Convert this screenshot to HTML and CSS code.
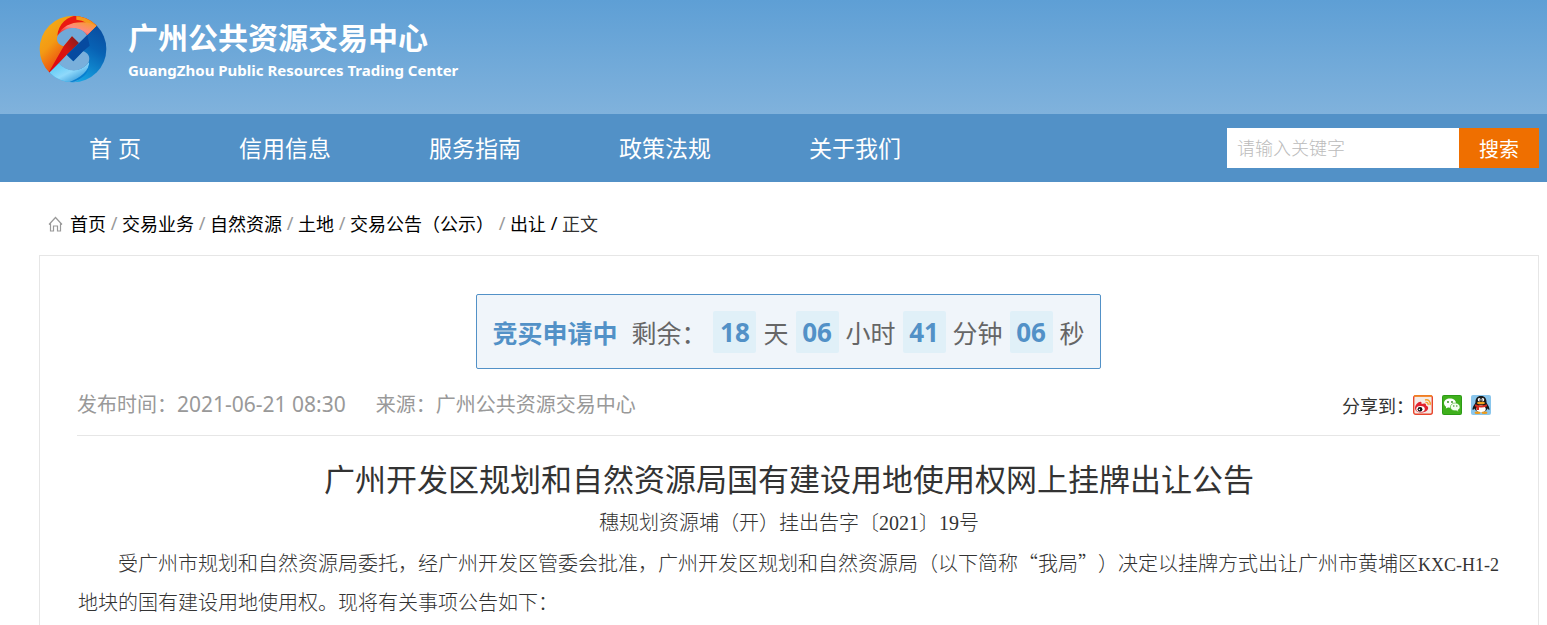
FILE: index.html
```html
<!DOCTYPE html>
<html lang="zh-CN">
<head>
  <meta charset="UTF-8">
  <meta name="viewport" content="width=device-width, initial-scale=1">
  <title>广州公共资源交易中心</title>
  <link rel="stylesheet" href="styles.css">
</head>
<body>
  <header class="header">
    <svg class="logo" viewBox="0 0 204 204" aria-hidden="true">
      <defs>
        <clipPath id="round"><circle cx="102" cy="102" r="100"/></clipPath>
        <linearGradient id="orange" x1="0" y1="0" x2=".6" y2=".6">
          <stop offset="0" stop-color="#f5b517"/>
          <stop offset=".5" stop-color="#f39a14"/>
          <stop offset=".8" stop-color="#ee5a10"/>
          <stop offset="1" stop-color="#e60012"/>
        </linearGradient>
        <linearGradient id="blue" x1="1" y1="0" x2=".4" y2="1">
          <stop offset="0" stop-color="#0a3f92"/>
          <stop offset=".45" stop-color="#0862b4"/>
          <stop offset="1" stop-color="#19b4ee"/>
        </linearGradient>
        <linearGradient id="pink" x1="0" y1="1" x2="1" y2="0">
          <stop offset="0" stop-color="#e60f12"/>
          <stop offset=".5" stop-color="#ff8a80"/>
          <stop offset="1" stop-color="#f5a01c"/>
        </linearGradient>
        <linearGradient id="cyan" x1="0" y1="0" x2="1" y2="1">
          <stop offset="0" stop-color="#48c4f2"/>
          <stop offset=".5" stop-color="#8fd9fb"/>
          <stop offset="1" stop-color="#0b7bc9"/>
        </linearGradient>
        <linearGradient id="fold" x1="0" y1="1" x2="1" y2="0">
          <stop offset="0" stop-color="#e60012"/>
          <stop offset=".6" stop-color="#d8140f"/>
          <stop offset="1" stop-color="#7d1c22"/>
        </linearGradient>
      </defs>
      <g clip-path="url(#round)">
        <path fill="url(#orange)" d="M0 204V0H204Z"/>
        <path fill="url(#blue)" d="M204 0V204H0Z"/>
        <path fill="#ea1a12" d="M55 62C58 28 84 2 122 0C142 2 160 12 178 27L144 60C120 36 80 38 55 62Z"/>
        <path fill="#f39a1c" d="M112 0C140 0 164 10 178 27L160 44C150 28 136 16 112 14Z"/>
        <path fill="url(#pink)" d="M57 60C72 28 112 14 160 26L172 33L145 60C120 32 82 36 57 60Z"/>
        <path fill="#71a9d8" d="M56 62C78 32 126 32 144 61L120 87L99 64L74 94C56 88 50 76 56 62Z"/>
        <path fill="url(#cyan)" d="M26 178C52 198 76 208 104 204C132 190 152 168 150 142C126 172 88 174 60 145Z"/>
        <path fill="#087fd0" d="M84 204C126 190 154 164 150 139C156 174 126 200 84 204Z"/>
        <path fill="#79afdb" d="M60 145C82 174 128 174 149 142C155 124 146 113 132 109L103 139L83 119Z"/>
        <path fill="url(#fold)" d="M26 178L74 94L99 64L120 84L83 119Z"/>
        <path fill="#064aa0" d="M83 119L120 84L145 60L152 92L132 109L103 139Z"/>
      </g>
    </svg>
    <div class="brand">
      <h1 class="brand-name">广州公共资源交易中心</h1>
      <p class="brand-en">GuangZhou Public Resources Trading Center</p>
    </div>
  </header>

  <div class="navbar">
    <nav class="menu">
      <a href="#">首 页</a>
      <a href="#">信用信息</a>
      <a href="#">服务指南</a>
      <a href="#">政策法规</a>
      <a href="#">关于我们</a>
    </nav>
    <form class="search">
      <input type="text" placeholder="请输入关键字" aria-label="请输入关键字">
      <button type="submit">搜索</button>
    </form>
  </div>

  <nav class="crumbs">
    <svg class="home" viewBox="0 0 15 16" aria-hidden="true">
      <path d="M1 8.500L7.500 1.500L14 8.500M2.500 7.500V15H5.500V10H9.500V15H12.500V7.500" fill="none" stroke="#999" stroke-width="1.200"/>
    </svg>
    <a href="#">首页</a><span class="sep">/</span>
    <a href="#">交易业务</a><span class="sep">/</span>
    <a href="#">自然资源</a><span class="sep">/</span>
    <a href="#">土地</a><span class="sep">/</span>
    <a href="#">交易公告（公示）</a><span class="sep">/</span>
    <a href="#">出让</a><span class="sep last">/</span>
    <span class="current">正文</span>
  </nav>

  <main class="card">
    <div class="countdown">
      <strong class="state">竞买申请中</strong>
      <span class="remain">剩余：</span>
      <b>18</b><span>天</span>
      <b>06</b><span>小时</span>
      <b>41</b><span>分钟</span>
      <b>06</b><span>秒</span>
    </div>

    <div class="meta">
      <span>发布时间：<time>2021-06-21 08:30</time></span>
      <span>来源：广州公共资源交易中心</span>
      <div class="share">
        <span class="share-label">分享到：</span>
        <a href="#" aria-label="新浪微博">
          <svg viewBox="0 0 20 20">
            <rect x=".7" y=".7" width="18.600" height="18.600" rx="2" fill="#f5ebe6" stroke="#e8452c" stroke-width="1.400"/>
            <path d="M1 1H19" stroke="#f28a24" stroke-width="1.600"/>
            <path d="M2 13C2 10 6 6 8 7C9 7.500 8.500 9 8.500 9C11 8 13.500 8 13 10.500C16 11.500 15.500 14 14 15.500C10 19 2 18 2 13Z" fill="#e2222f"/>
            <ellipse cx="7.500" cy="14" rx="4.300" ry="2.900" fill="#fff"/>
            <circle cx="7" cy="14.300" r="2.400" fill="#111"/>
            <circle cx="6.400" cy="14.500" r=".7" fill="#fff"/>
            <path d="M12 5C15.500 4 18 7 17 10M12.500 7.500C14.500 7 15.500 8.500 15 10" fill="none" stroke="#f5a02c" stroke-width="1.400"/>
          </svg>
        </a>
        <a href="#" aria-label="微信">
          <svg viewBox="0 0 20 20">
            <rect width="20" height="20" rx="2" fill="#2c9b16"/>
            <rect x="1" y="1" width="18" height="18" rx="1" fill="#3fb01c"/>
            <path d="M8 3.500C4.500 3.500 2 5.500 2 8.200C2 9.800 2.900 11 4.200 11.800L3.800 13.500L6 12.500C10.500 13.300 14 11 14 8.200C14 5.500 11.500 3.500 8 3.500Z" fill="#fff"/>
            <path d="M13.200 8C10.500 8 8.400 9.700 8.400 12C8.400 14.500 11 16.400 14.300 15.700L16.500 16.800L16 15C17.300 14.300 18 13.200 18 12C18 9.700 15.900 8 13.200 8Z" fill="#f4fff0" stroke="#3fb01c" stroke-width=".6"/>
            <g fill="#2c8616"><circle cx="6" cy="7" r=".9"/><circle cx="10" cy="7" r=".9"/><circle cx="11.800" cy="11" r=".7"/><circle cx="14.800" cy="11" r=".7"/></g>
          </svg>
        </a>
        <a href="#" aria-label="QQ">
          <svg viewBox="0 0 20 20">
            <rect width="20" height="20" rx="2" fill="#8ac6ec"/>
            <path d="M10 1C6 1 4.500 3.700 4.500 7C4.500 9 1.500 11 1.500 14.500C2 15.500 3 14 3.500 13.500C4.500 16 7 17.500 10 17.500S15.500 16 16.500 13.500C17 14 18 15.500 18.500 14.500C18.500 11 15.500 9 15.500 7C15.500 3.700 14 1 10 1Z" fill="#181818"/>
            <ellipse cx="10" cy="14" rx="4.800" ry="3.700" fill="#fff"/>
            <path d="M4.300 9.300C8 11 12 11 15.700 9.300L16.200 11.200C12 12.800 8 12.800 3.800 11.200Z" fill="#d92b1c"/>
            <path d="M5.500 11.500H8V15H5.500Z" fill="#d92b1c"/>
            <ellipse cx="8.200" cy="4.800" rx="1.400" ry="1.700" fill="#fff"/>
            <ellipse cx="11.800" cy="4.800" rx="1.400" ry="1.700" fill="#fff"/>
            <circle cx="8.700" cy="5" r=".6"/><circle cx="11.300" cy="5" r=".6"/>
            <ellipse cx="10" cy="8" rx="4" ry="1.300" fill="#f5a21c"/>
            <ellipse cx="6.500" cy="17.700" rx="3" ry="1.300" fill="#ee9a1a"/>
            <ellipse cx="13.500" cy="17.700" rx="3" ry="1.300" fill="#ee9a1a"/>
          </svg>
        </a>
      </div>
    </div>

    <article class="article">
      <h2>广州开发区规划和自然资源局国有建设用地使用权网上挂牌出让公告</h2>
      <p class="doc-no">穗规划资源埔（开）挂出告字〔2021〕19号</p>
      <p class="text">受广州市规划和自然资源局委托，经广州开发区管委会批准，广州开发区规划和自然资源局（以下简称“我局”）决定以挂牌方式出让广州市黄埔区<span class="code">KXC-H1-2</span>地块的国有建设用地使用权。现将有关事项公告如下：</p>
    </article>
  </main>
</body>
</html>
```
FILE: styles.css
```css
* { box-sizing: border-box; margin: 0; padding: 0; }

body {
  display: flex;
  flex-direction: column;
  min-height: 100vh;
  background: #fff;
  color: #333;
  font-family: "Noto Sans", "Noto Sans CJK SC", sans-serif;
}

a { color: inherit; text-decoration: none; }

/* header */
.header {
  display: flex;
  gap: 21px;
  height: 114px;
  padding: 15px 8px 0 39px;
  background: linear-gradient(#5e9fd5, #80b2dc);
  color: #fff;
}
.logo { width: 68px; height: 68px; }
.brand-name { font-size: 30px; line-height: 45px; }
.brand-en { font-size: 15px; line-height: 20px; font-weight: bold; }

/* menu and search */
.navbar {
  display: flex;
  align-items: center;
  justify-content: space-between;
  height: 68px;
  padding: 0 8px 0 89px;
  background: #5291c7;
  color: #fff;
}
.menu { display: flex; gap: 98px; padding-bottom: 3px; font-size: 23px; }
.search { display: flex; height: 40px; }
.search input {
  width: 232px;
  padding: 0 10px;
  border: 0;
  font-family: inherit;
  font-size: 18px;
  font-weight: 300;
}
.search input::placeholder { color: #bbb; }
.search button {
  width: 80px;
  border: 0;
  background: #ef6f00;
  color: #fff;
  font-family: inherit;
  font-size: 20px;
}

/* breadcrumbs */
.crumbs {
  display: flex;
  align-items: center;
  height: 73px;
  padding: 8px 8px 0 48px;
  color: #000;
  font-size: 18px;
}
.home { width: 15px; height: 16px; margin: 3px 7px 0 0; }
.sep { width: 16px; text-align: center; color: #999; }
.last { color: #000; }
.current { color: #333; }

/* content */
.card {
  flex: 1;
  margin: 0 8px 0 39px;
  padding: 38px 38px 0 37px;
  border: 1px solid #e6e6e6;
  border-bottom: 0;
}
.countdown {
  display: flex;
  align-items: center;
  gap: 7px;
  width: max-content;
  height: 75px;
  margin: 0 auto;
  padding: 0 15px;
  border: 1px solid #5291c7;
  border-radius: 2px;
  background: #f0f5fa;
  color: #666;
  font-size: 25px;
}
.countdown .state { margin-right: 7px; color: #5291c7; }
.countdown b {
  width: 43px;
  border-radius: 2px;
  background: #e0f0f8;
  color: #5291c7;
  font-size: 26px;
  line-height: 42px;
  text-align: center;
}

.meta {
  display: flex;
  align-items: center;
  gap: 30px;
  height: 67px;
  padding: 3px 9px 0 0;
  border-bottom: 1px solid #e6e6e6;
  color: #999;
  font-size: 20px;
}
.meta time { font-size: 21px; }
.share {
  display: flex;
  align-items: center;
  gap: 9px;
  margin-left: auto;
  padding-top: 3px;
  color: #333;
  font-size: 18px;
}
.share-label { margin-right: -10px; }
.share svg { display: block; width: 20px; height: 20px; }

.article {
  padding: 25px 0 0 1px;
  font-family: "Liberation Serif", "Noto Sans CJK SC", serif;
}
.article h2 {
  margin-bottom: 3px;
  font-size: 31px;
  line-height: 40px;
  font-weight: normal;
  text-align: center;
}
.article p { font-size: 20px; line-height: 39px; font-weight: 300; }
.article .doc-no { text-align: center; }
.article .text {
  font-family: "Noto Sans CJK SC", sans-serif;
  text-indent: 2em;
  text-spacing-trim: space-all;
}
.article .code { font-family: "Liberation Serif", serif; font-size: 18px; line-height: 1; }
```
